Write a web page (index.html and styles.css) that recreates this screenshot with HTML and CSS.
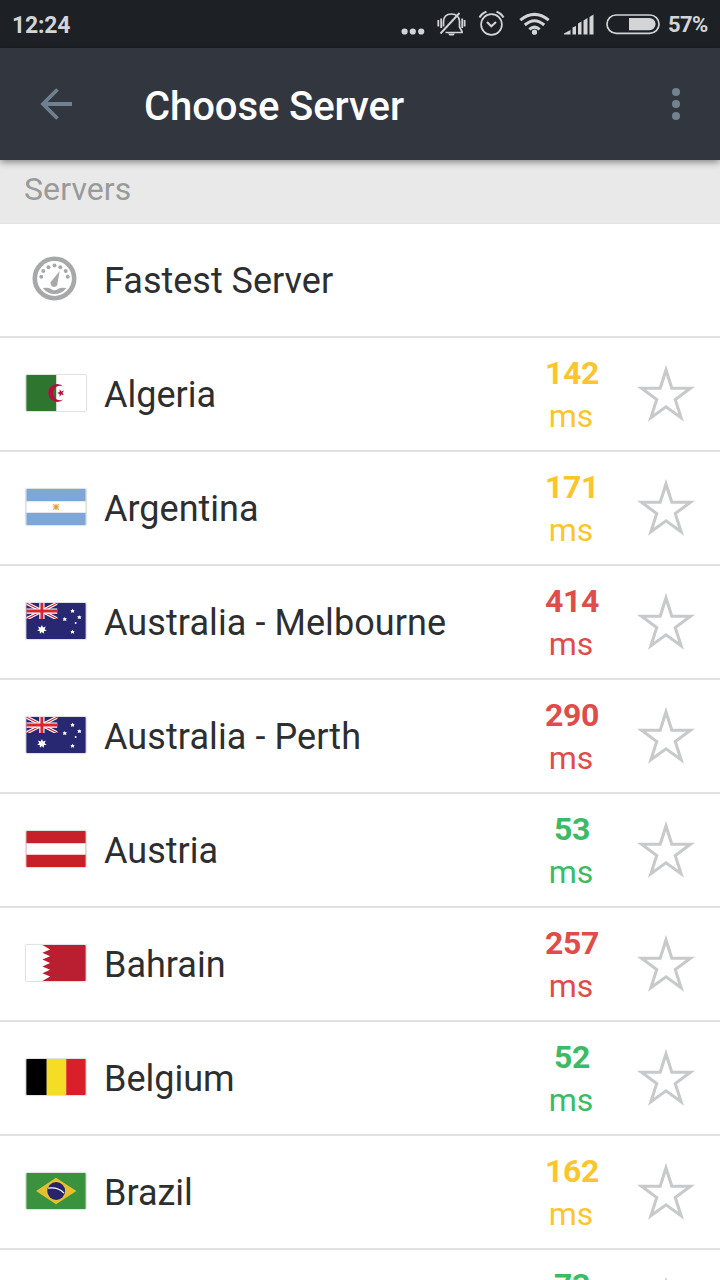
FILE: index.html
```
<!DOCTYPE html>
<html lang="en">
<head>
<meta charset="utf-8">
<title>Choose Server</title>
<link rel="stylesheet" href="styles.css">
</head>
<body>
<svg class="defs" width="0" height="0" aria-hidden="true">
  <symbol id="star" viewBox="0 0 60 60">
    <path d="M30 6L35.800 24.300H54.400L39.300 35.600L45.100 53.700L30 42.800L14.900 53.700L20.700 35.600L5.600 24.300H24.200Z" fill="none" stroke="#c8c9ca" stroke-width="3.100" stroke-miterlimit="6"/>
  </symbol>
  <symbol id="flag-dz" viewBox="0 0 61 37">
    <path d="M0 0H31V37H0Z" fill="#2e7530"/><path d="M31 0H61V37H31Z" fill="#fff"/>
    <path d="M38.300 12A9.200 9.200 0 1 0 38.300 25A7.400 7.400 0 1 1 38.300 12Z" fill="#b90b3e"/>
    <path d="M31.500 18.500L34.200 17.500L34.300 14.700L36 16.900L38.700 16L37.100 18.400L38.700 20.800L36 20L34.200 22.300L34.100 19.400Z" fill="#b90b3e"/>
  </symbol>
  <symbol id="flag-ar" viewBox="0 0 61 37">
    <path d="M0 0H61V37H0Z" fill="#7ea6d7"/><path d="M0 12.500H61V24.500H0Z" fill="#fff"/>
    <path d="M27.500 15.500L33.500 21.500M33.500 15.500L27.500 21.500M27 18.500H34M30.500 15.500V21.500" stroke="#e8ad50" stroke-width="1.200"/>
    <circle cx="30.500" cy="18.500" r="1.800" fill="#e2a33c"/>
  </symbol>
  <symbol id="flag-au" viewBox="0 0 61 37">
    <path d="M0 0H61V37H0Z" fill="#282772"/>
    <svg width="32" height="16.500" viewBox="0 0 32 16.500">
      <path d="M0 0L32 16.500M32 0L0 16.500" stroke="#fff" stroke-width="3.400"/>
      <path d="M0 0L32 16.500M32 0L0 16.500" stroke="#d9232e" stroke-width="1.100"/>
      <path d="M16 0V17M0 8.300H32" stroke="#fff" stroke-width="5.400"/>
      <path d="M16 0V17M0 8.300H32" stroke="#d9232e" stroke-width="3"/>
    </svg>
    <path d="M16 22.500L17.200 25.200L20 24.100L18.800 26.900L21 28.500L18.200 28.900L17.900 31.700L16 29.700L14 31.700L13.800 28.900L11 28.500L13.200 26.900L12 24.100L14.800 25.200Z" fill="#fff"/>
    <g fill="#fff">
      <path d="M47.500 6L48.200 7.200L49.700 7.200L48.800 8.500L49.200 10L47.500 9.400L45.800 10L46.200 8.500L45.300 7.200L46.800 7.200Z"/>
      <path d="M39.500 14.500L40.200 15.700L41.700 15.700L40.800 17L41.200 18.500L39.500 17.900L37.800 18.500L38.200 17L37.300 15.700L38.800 15.700Z"/>
      <path d="M54.500 12.500L55.200 13.700L56.700 13.700L55.800 15L56.200 16.500L54.500 15.900L52.800 16.500L53.200 15L52.300 13.700L53.800 13.700Z"/>
      <path d="M47.500 27.500L48.200 28.700L49.700 28.700L48.800 30L49.200 31.500L47.500 30.900L45.800 31.500L46.200 30L45.300 28.700L46.800 28.700Z"/>
      <circle cx="50.700" cy="20.500" r="1"/>
    </g>
  </symbol>
  <symbol id="flag-at" viewBox="0 0 61 37">
    <path d="M0 0H61V37H0Z" fill="#c62028"/><path d="M0 12.500H61V24.500H0Z" fill="#fff"/>
  </symbol>
  <symbol id="flag-bh" viewBox="0 0 61 37">
    <path d="M0 0H61V37H0Z" fill="#fff"/>
    <path d="M61 0H16.500L24.500 4.500L16.500 8L24.500 11.500L16.500 15L24.500 18.500L16.500 22L24.500 25.500L16.500 29L24.500 32.500L16.500 37H61Z" fill="#b91f31"/>
  </symbol>
  <symbol id="flag-be" viewBox="0 0 61 37">
    <path d="M0 0H21V37H0Z" fill="#000"/><path d="M21 0H41V37H21Z" fill="#f5dd25"/><path d="M41 0H61V37H41Z" fill="#d9202a"/>
  </symbol>
  <symbol id="flag-br" viewBox="0 0 61 37">
    <path d="M0 0H61V37H0Z" fill="#3a923e"/><path d="M10 18.500L30.500 5L51.500 18.500L30.500 32Z" fill="#e4c02e"/>
    <circle cx="30.700" cy="18.500" r="9.200" fill="#28246c"/>
    <path d="M22.300 15.600C28.500 14.600 35 16.500 38.700 20.700" fill="none" stroke="#fff" stroke-width="1.300"/>
  </symbol>
</svg>

<div class="status-bar">
  <span class="clock">12:24</span>
  <svg class="status-icons" width="260" height="48" viewBox="400 0 260 48" fill="none" stroke="#d2d4d6" stroke-width="1.700">
    <g fill="#d2d4d6" stroke="none">
      <circle cx="404.600" cy="31.500" r="3.100"/><circle cx="412.800" cy="31.500" r="3.100"/><circle cx="421.200" cy="31.500" r="3.100"/>
    </g>
    <path d="M443.500 26.500V22C443.500 17 446 14 451.500 14C457 14 459 17 459.500 21V27L462 31.500V32.500H445.500"/>
    <path d="M440.500 33.500L459.500 13" stroke-width="1.900"/>
    <path d="M448 33.500H455L453.500 35.500H449.500Z" fill="#d2d4d6" stroke="none"/>
    <path d="M438.300 20V26.500M441.200 18.500V28M462.200 18.500V28M464.600 20V26.500" stroke-width="1.800"/>
    <circle cx="491.500" cy="24.500" r="10.400"/>
    <path d="M487 22L491.300 26.300L496 22" stroke-width="2"/>
    <path d="M479.500 17.500Q482 13 486.500 11.700M503.500 17.500Q501 13 496.500 11.700" stroke-width="2"/>
    <g stroke-width="3">
      <path d="M520.300 20.200Q534.500 8.500 548.700 20.200"/><path d="M524.800 25Q534.500 16.500 544.200 25"/><path d="M529.300 29.300Q534.500 25 539.700 29.300"/>
    </g>
    <circle cx="534.500" cy="32.200" r="2.600" fill="#d2d4d6" stroke="none"/>
    <path d="M564 34.500V33.500L570.500 30V34.500ZM572.500 34.500V27.500L576 26V34.500ZM578 34.500V23.500L581.500 21.500V34.500ZM583.500 34.500V20.500L587.500 18V34.500ZM589.500 34.500V17L593.500 14.500V34.500Z" fill="#d2d4d6" stroke="none"/>
    <rect x="607" y="15" width="52" height="18.300" rx="9.100"/>
    <path d="M629 18H649.500A6.100 6.100 0 0 1 649.500 30.200H629Z" fill="#d2d4d6" stroke="none"/>
  </svg>
  <span class="battery">57%</span>
</div>

<header class="toolbar">
  <svg class="back" width="34" height="34" viewBox="0 0 34 34" fill="none" stroke="#708090" stroke-width="3.800"><path d="M33 17H4M18.500 2.500L4 17L18.500 31.500"/></svg>
  <h1 class="title">Choose Server</h1>
  <svg class="more" width="8" height="34" viewBox="0 0 8 34" fill="#73828f"><circle cx="4" cy="5" r="4"/><circle cx="4" cy="17" r="4"/><circle cx="4" cy="29" r="4"/></svg>
</header>

<h2 class="section">Servers</h2>

<main class="list">
  <div class="row">
    <svg class="gauge" width="46" height="46" viewBox="0 0 46 46" fill="#a6a8aa">
      <circle cx="23.500" cy="22.500" r="19.700" fill="none" stroke="#a6a8aa" stroke-width="4.600"/>
      <circle cx="10.300" cy="20.700" r="2"/><circle cx="12.300" cy="15" r="2"/><circle cx="17.500" cy="11.300" r="2"/><circle cx="23.500" cy="9.500" r="2"/><circle cx="29.300" cy="11.300" r="2"/><circle cx="34.700" cy="15" r="2"/><circle cx="36.700" cy="20.700" r="2"/>
      <path d="M28.700 15L26.500 27A3.500 3.500 0 1 1 21 24.500Z"/>
      <path d="M11.700 32Q17.500 31 20 33Q23.500 35.500 27 33Q29.500 31 35.500 32Q30.500 38 23.500 38Q16.500 38 11.700 32Z"/>
    </svg>
    <span class="name">Fastest Server</span>
  </div>
  <div class="row">
    <svg class="flag"><use href="#flag-dz"/></svg><span class="name">Algeria</span>
    <div class="ping medium"><b>142</b><span>ms</span></div><svg class="star"><use href="#star"/></svg>
  </div>
  <div class="row">
    <svg class="flag"><use href="#flag-ar"/></svg><span class="name">Argentina</span>
    <div class="ping medium"><b>171</b><span>ms</span></div><svg class="star"><use href="#star"/></svg>
  </div>
  <div class="row">
    <svg class="flag"><use href="#flag-au"/></svg><span class="name spaced">Australia - Melbourne</span>
    <div class="ping slow"><b>414</b><span>ms</span></div><svg class="star"><use href="#star"/></svg>
  </div>
  <div class="row">
    <svg class="flag"><use href="#flag-au"/></svg><span class="name spaced">Australia - Perth</span>
    <div class="ping slow"><b>290</b><span>ms</span></div><svg class="star"><use href="#star"/></svg>
  </div>
  <div class="row">
    <svg class="flag"><use href="#flag-at"/></svg><span class="name">Austria</span>
    <div class="ping fast"><b>53</b><span>ms</span></div><svg class="star"><use href="#star"/></svg>
  </div>
  <div class="row">
    <svg class="flag"><use href="#flag-bh"/></svg><span class="name">Bahrain</span>
    <div class="ping slow"><b>257</b><span>ms</span></div><svg class="star"><use href="#star"/></svg>
  </div>
  <div class="row">
    <svg class="flag"><use href="#flag-be"/></svg><span class="name">Belgium</span>
    <div class="ping fast"><b>52</b><span>ms</span></div><svg class="star"><use href="#star"/></svg>
  </div>
  <div class="row">
    <svg class="flag"><use href="#flag-br"/></svg><span class="name">Brazil</span>
    <div class="ping medium"><b>162</b><span>ms</span></div><svg class="star"><use href="#star"/></svg>
  </div>
  <div class="row">
    <span class="flag-space"></span><span class="name"></span>
    <div class="ping fast"><b>73</b></div><svg class="star"><use href="#star"/></svg>
  </div>
</main>
</body>
</html>
```
FILE: styles.css
```
* { box-sizing: border-box; }
html { overflow: hidden; }
body {
  margin: 0;
  width: 720px;
  height: 1280px;
  overflow: hidden;
  display: flex;
  flex-direction: column;
  background: #fff;
  color: #2d2e30;
  font-family: Roboto, sans-serif;
}
svg { display: block; flex: none; }
.defs { position: absolute; }
.status-bar {
  flex: none;
  display: flex;
  align-items: center;
  height: 48px;
  padding: 0 12px;
  background: #1d2024;
  color: #d2d4d6;
  font-size: 23px;
  font-weight: 700;
}
.clock { padding-top: 2px; letter-spacing: -.2px; }
.status-icons { margin-left: auto; }
.battery { width: 40px; margin-left: 8px; padding-top: 1px; font-size: 22px; letter-spacing: -.6px; }
.toolbar {
  flex: none;
  position: relative;
  display: flex;
  align-items: center;
  height: 112px;
  padding: 0 40px 0 39px;
  background: #32363e;
  box-shadow: 0 2px 7px rgba(0, 0, 0, .45);
}
.title {
  flex: 1;
  margin: 0;
  padding: 4px 0 0 71px;
  color: #fff;
  font-size: 40px;
  font-weight: 500;
  letter-spacing: -.08px;
}
.section {
  flex: none;
  height: 64px;
  margin: 0;
  padding-left: 24px;
  border-bottom: 1px solid #e2e2e2;
  background: #e9e9e9;
  color: #9a9a9a;
  font-size: 32px;
  font-weight: 400;
  line-height: 59px;
  letter-spacing: .1px;
}
.list { flex: 1; min-height: 0; overflow: hidden; }
.row {
  display: flex;
  align-items: flex-start;
  height: 114px;
  padding: 0 24px 0 25px;
  border-bottom: 2px solid #e2e2e2;
}
.gauge { margin: 32px 8px 0 6px; }
.flag {
  width: 60px;
  height: 36px;
  margin: 37px 0 0 1px;
  border-radius: 1px;
  box-shadow: 0 0 1px 1px rgba(0, 0, 0, .13);
}
.flag-space { width: 61px; }
.name {
  flex: 1;
  padding-left: 18px;
  font-size: 36px;
  line-height: 114px;
}
.spaced { letter-spacing: .08px; }
.gauge + .name { padding-left: 19px; }
.ping {
  display: flex;
  flex-direction: column;
  align-items: center;
  width: 80px;
  padding-top: 14px;
  font-size: 32px;
  line-height: 43px;
}
.ping b { padding-left: 2px; font-weight: 700; letter-spacing: -.3px; }
.star { width: 60px; height: 60px; margin: 26px 0 0 25px; }
.medium { color: #fbc52d; }
.slow { color: #e04c49; }
.fast { color: #3bbb63; }
```
